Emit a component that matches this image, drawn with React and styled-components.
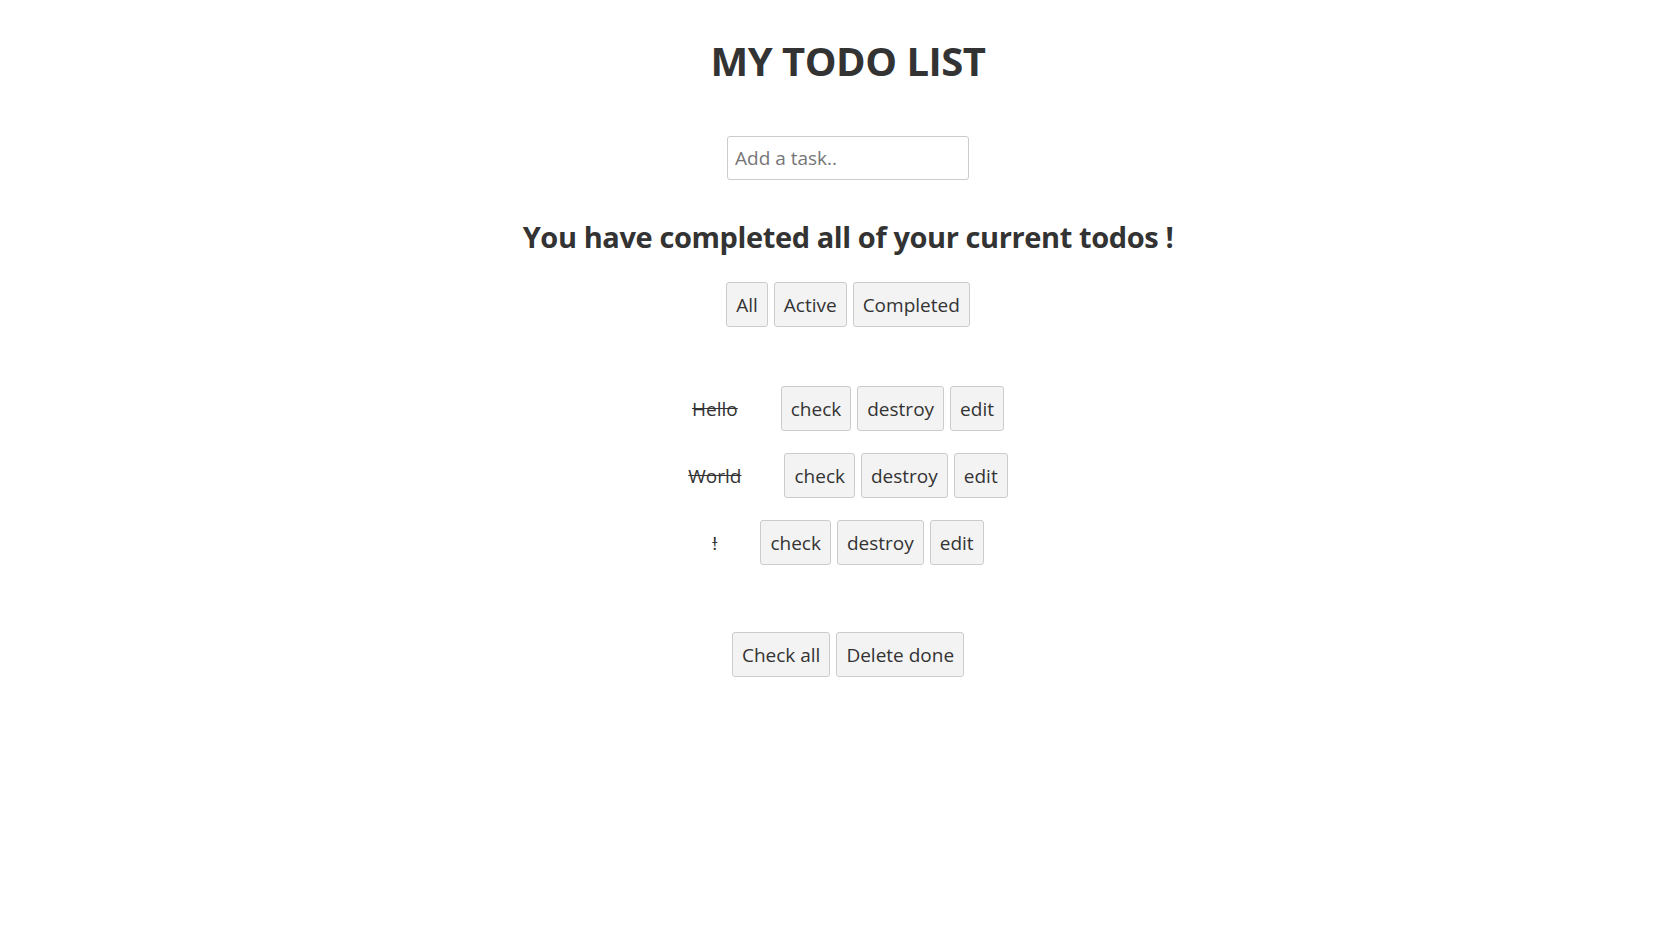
import React, { useState } from 'react';
import styled, { createGlobalStyle } from 'styled-components';

const GlobalStyle = createGlobalStyle`
  body {
    margin: 0;
    background: #fff;
    color: #333;
    font-family: "Open Sans", "Liberation Sans", sans-serif;
  }
`;

const Page = styled.div`
  display: flex;
  flex-direction: column;
  align-items: center;
  padding: 41px 0 40px 19px;
`;

const Title = styled.h1`
  margin: 0;
  font-size: 40px;
  line-height: 1;
  font-weight: 700;
  letter-spacing: -0.5px;
`;

const TaskInput = styled.input`
  box-sizing: border-box;
  margin-top: 55px;
  width: 242px;
  height: 44px;
  padding: 0 7px;
  border: 1px solid #ccc;
  border-radius: 3px;
  font-family: inherit;
  font-size: 19px;
  color: #333;
  outline: none;

  &::placeholder {
    color: #767676;
  }
`;

const Status = styled.h2`
  margin: 42px 0 0;
  font-size: 29px;
  line-height: 1;
  font-weight: 700;
  letter-spacing: -0.4px;
`;

const ButtonRow = styled.div`
  display: flex;
  justify-content: center;
  align-items: center;
  gap: 6px;
  margin-top: ${p => p.$top || 0}px;
`;

const Button = styled.button`
  box-sizing: border-box;
  height: 45px;
  padding: 0 9px;
  background: #f3f3f3;
  border: 1px solid #ccc;
  border-radius: 3px;
  font-family: inherit;
  font-size: 19px;
  color: #333;
  cursor: pointer;
`;

const TodoList = styled.ul`
  display: flex;
  flex-direction: column;
  align-items: center;
  gap: 22px;
  margin: 59px 0 0;
  padding: 0;
  list-style: none;
`;

const TodoItem = styled.li`
  display: flex;
  align-items: center;
  gap: 6px;
`;

const TodoText = styled.span`
  margin-right: 37px;
  font-size: 19px;
  text-decoration: ${p => (p.$done ? 'line-through' : 'none')};
`;

const initialTodos = [
  { id: 1, text: 'Hello', done: true },
  { id: 2, text: 'World', done: true },
  { id: 3, text: '!', done: true },
];

export default function App() {
  const [todos] = useState(initialTodos);

  return (
    <>
      <GlobalStyle />
      <Page>
        <Title>MY TODO LIST</Title>
        <TaskInput placeholder="Add a task.." />
        <Status>You have completed all of your current todos !</Status>
        <ButtonRow $top={31}>
          <Button>All</Button>
          <Button>Active</Button>
          <Button>Completed</Button>
        </ButtonRow>
        <TodoList>
          {todos.map(todo => (
            <TodoItem key={todo.id}>
              <TodoText $done={todo.done}>{todo.text}</TodoText>
              <Button>check</Button>
              <Button>destroy</Button>
              <Button>edit</Button>
            </TodoItem>
          ))}
        </TodoList>
        <ButtonRow $top={67}>
          <Button>Check all</Button>
          <Button>Delete done</Button>
        </ButtonRow>
      </Page>
    </>
  );
}
